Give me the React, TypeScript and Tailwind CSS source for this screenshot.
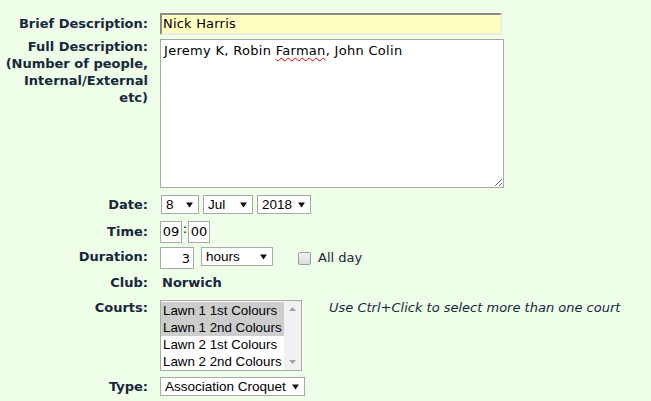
import React from 'react';

const label = 'w-[148px] shrink-0 text-right font-bold';

function Arrow() {
  return (
    <svg width="7" height="6" viewBox="0 0 7 6" className="shrink-0">
      <path d="M0 0.5 L7 0.5 L3.5 5.5 Z" fill="#111" />
    </svg>
  );
}

function FakeSelect({ value, width }: { value: string; width: string }) {
  return (
    <div
      className={`${width} h-[19px] inline-flex items-center justify-between border border-[#a9a9a9] bg-white pl-[4px] pr-[5px] text-[13.5px] leading-none text-black whitespace-nowrap font-['Liberation_Sans',Arial,sans-serif]`}
    >
      <span>{value}</span>
      <Arrow />
    </div>
  );
}

function Row({
  name,
  children,
  className = '',
  align = 'items-center',
  labelClass = '',
}: {
  name: React.ReactNode;
  children: React.ReactNode;
  className?: string;
  align?: string;
  labelClass?: string;
}) {
  return (
    <div className={`flex ${align} gap-[12px] ${className}`}>
      <div className={`${label} ${labelClass}`}>{name}</div>
      <div className="flex items-center">{children}</div>
    </div>
  );
}

export default function App() {
  const courts = [
    { name: 'Lawn 1 1st Colours', sel: true },
    { name: 'Lawn 1 2nd Colours', sel: true },
    { name: 'Lawn 2 1st Colours', sel: false },
    { name: 'Lawn 2 2nd Colours', sel: false },
  ];

  return (
    <div className="min-h-[401px] w-[651px] bg-[#effee8] pt-[13px] text-[13px] leading-[16px] text-[#15283c] font-['DejaVu_Sans',Verdana,sans-serif]">
      <Row name="Brief Description:">
        <div className="w-[342px] h-[22px] flex items-center bg-[#ffffc2] border-2 border-t-[#8a8a8a] border-l-[#8a8a8a] border-b-[#ececd8] border-r-[#ececd8] px-[1px] text-black tracking-[0.2px]">
          Nick Harris
        </div>
      </Row>

      <Row
        className="mt-[4px]"
        align="items-start"
        labelClass="leading-[17px] -mt-[1px]"
        name={
          <>
            Full Description:
            <br />
            (Number of people,
            <br />
            Internal/External
            <br />
            etc)
          </>
        }
      >
        <div className="w-[344px] h-[149px] border border-[#a9a9a9] bg-white px-[3px] py-[3px] text-black tracking-[0.3px] overflow-auto resize">
          Jeremy K, Robin{' '}
          <span className="underline decoration-wavy decoration-[#e00] decoration-1 underline-offset-2">
            Farman
          </span>
          , John Colin
        </div>
      </Row>

      <Row className="mt-[7px]" name="Date:">
        <div className="flex items-center gap-[4px] pl-[1px]">
          <FakeSelect value="8" width="w-[38px]" />
          <FakeSelect value="Jul" width="w-[50px]" />
          <FakeSelect value="2018" width="w-[54px]" />
        </div>
      </Row>

      <Row className="mt-[7px]" name="Time:">
        <div className="flex items-center">
          <div className="w-[22px] h-[22px] border border-[#a9a9a9] bg-white flex items-center justify-center text-black">
            09
          </div>
          <span className="w-[6px] text-center text-black -mt-[6px]">:</span>
          <div className="w-[22px] h-[22px] border border-[#a9a9a9] bg-white flex items-center justify-center text-black">
            00
          </div>
        </div>
      </Row>

      <Row className="mt-[4px]" labelClass="-mt-[3px]" name="Duration:">
        <div className="flex items-start">
          <div className="w-[34px] h-[22px] border border-[#a9a9a9] bg-white flex items-end justify-end pr-[3px] pb-[1px] text-black">
            3
          </div>
          <div className="ml-[7px]">
            <FakeSelect value="hours" width="w-[72px]" />
          </div>
          <div className="ml-[25px] mt-[3px] flex items-center gap-[7px]">
            <div className="w-[13px] h-[13px] rounded-[2px] border border-[#a0a0a0] bg-gradient-to-b from-[#f4f4f4] to-[#dcdcdc]" />
            <span>All day</span>
          </div>
        </div>
      </Row>

      <Row className="mt-[6px]" name="Club:">
        <span className="font-bold pl-[2px]">Norwich</span>
      </Row>

      <Row className="mt-[9px]" align="items-start" name="Courts:">
        <div className="flex items-start">
          <div className="w-[142px] h-[71px] border border-[#a9a9a9] bg-white flex text-[13.33px] leading-[17px] text-black whitespace-nowrap font-['Liberation_Sans',Arial,sans-serif]">
            <div className="flex-1 py-[1px] overflow-hidden">
              {courts.map((c) => (
                <div key={c.name} className={`pl-[2px] h-[17px] ${c.sel ? 'bg-[#cdcdcd]' : ''}`}>
                  {c.name}
                </div>
              ))}
            </div>
            <div className="w-[17px] shrink-0 bg-[#f1f1f1] flex flex-col justify-between items-center py-[6px]">
              <svg width="7" height="4" viewBox="0 0 7 4">
                <path d="M0 4 L3.5 0 L7 4 Z" fill="#a3a3a3" />
              </svg>
              <svg width="7" height="4" viewBox="0 0 7 4">
                <path d="M0 0 L7 0 L3.5 4 Z" fill="#a3a3a3" />
              </svg>
            </div>
          </div>
          <span className="ml-[27px] italic">Use Ctrl+Click to select more than one court</span>
        </div>
      </Row>

      <Row className="mt-[6px]" name="Type:">
        <FakeSelect value="Association Croquet" width="w-[145px]" />
      </Row>
    </div>
  );
}
